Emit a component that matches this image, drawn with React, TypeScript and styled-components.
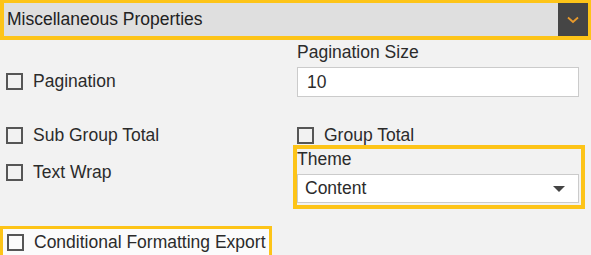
import React from 'react'
import styled, { createGlobalStyle } from 'styled-components'

const GlobalStyle = createGlobalStyle`
  body {
    margin: 0;
    background: #f2f2f2;
    font-family: "Liberation Sans", Arial, sans-serif;
    color: #2b2b2b;
  }
  * { box-sizing: border-box; }
`

const YELLOW = '#fdc418'

const Header = styled.div`
  display: flex;
  height: 40px;
  border: 3px solid ${YELLOW};
  border-left-width: 4px;
  border-bottom-width: 4px;
  background: #dfdfdf;
`

const Title = styled.div`
  flex: 1;
  display: flex;
  align-items: center;
  padding-left: 3px;
  font-size: 17.5px;
  color: #222;
`

const Toggle = styled.div`
  width: 30px;
  background: #454545;
  display: flex;
  align-items: center;
  justify-content: center;
`

const Form = styled.div`
  display: grid;
  grid-template-columns: 293px 1fr;
  grid-template-rows: 62px 43px 64px auto;
`

const Cell = styled.div<{ $right?: boolean }>`
  padding-left: ${(p) => (p.$right ? '4px' : '6px')};
  padding-right: ${(p) => (p.$right ? '12px' : '0')};
`

const CheckRow = styled.label<{ $top: number }>`
  display: flex;
  align-items: center;
  gap: 10px;
  height: 20px;
  margin-top: ${(p) => p.$top}px;
  font-size: 17.5px;
  color: #2b2b2b;
`

const Box = styled.span`
  width: 17px;
  height: 17px;
  border: 2px solid #565656;
  flex: none;
`

const Label = styled.div`
  font-size: 17.5px;
  line-height: 20px;
  margin-top: 2px;
  color: #2b2b2b;
`

const Input = styled.div`
  margin-top: 5px;
  height: 30px;
  background: #fff;
  border: 1px solid #cbcbcb;
  display: flex;
  align-items: center;
  padding-left: 9px;
  font-size: 17.5px;
`

const Highlight = styled.div`
  border: 4px solid ${YELLOW};
  padding: 0 2px 2px 0;
  margin-left: -4px;
  margin-right: -6px;
  height: 64px;
`

const Select = styled.div`
  margin-top: 5px;
  height: 29px;
  background: #fff;
  border: 1px solid #cbcbcb;
  display: flex;
  align-items: center;
  justify-content: space-between;
  padding: 0 13px 0 7px;
  font-size: 17.5px;
`

const Caret = styled.span`
  width: 0;
  height: 0;
  border-left: 6px solid transparent;
  border-right: 6px solid transparent;
  border-top: 6px solid #444;
`

const ExportBox = styled.div`
  grid-column: 1 / 2;
  width: 272px;
  margin-top: 17px;
  border: 3px solid ${YELLOW};
  border-bottom: none;
  background: #fbfbfb;
  padding: 3px 0 6px 4px;
`

const App: React.FC = () => {
  return (
    <>
      <GlobalStyle />
      <Header>
        <Title>Miscellaneous Properties</Title>
        <Toggle>
          <svg width="12" height="8" viewBox="0 0 12 8">
            <path d="M1 1.5 L6 6 L11 1.5" fill="none" stroke="#e89a2c" strokeWidth="1.8" />
          </svg>
        </Toggle>
      </Header>
      <Form>
        <Cell>
          <CheckRow $top={31}>
            <Box />
            Pagination
          </CheckRow>
        </Cell>
        <Cell $right>
          <Label>Pagination Size</Label>
          <Input>10</Input>
        </Cell>
        <Cell>
          <CheckRow $top={23}>
            <Box />
            Sub Group Total
          </CheckRow>
        </Cell>
        <Cell $right>
          <CheckRow $top={23}>
            <Box />
            Group Total
          </CheckRow>
        </Cell>
        <Cell>
          <CheckRow $top={17}>
            <Box />
            Text Wrap
          </CheckRow>
        </Cell>
        <Cell $right>
          <Highlight>
            <Label style={{ marginTop: 0 }}>Theme</Label>
            <Select>
              Content
              <Caret />
            </Select>
          </Highlight>
        </Cell>
        <ExportBox>
          <CheckRow $top={0}>
            <Box />
            Conditional Formatting Export
          </CheckRow>
        </ExportBox>
      </Form>
    </>
  )
}

export default App
